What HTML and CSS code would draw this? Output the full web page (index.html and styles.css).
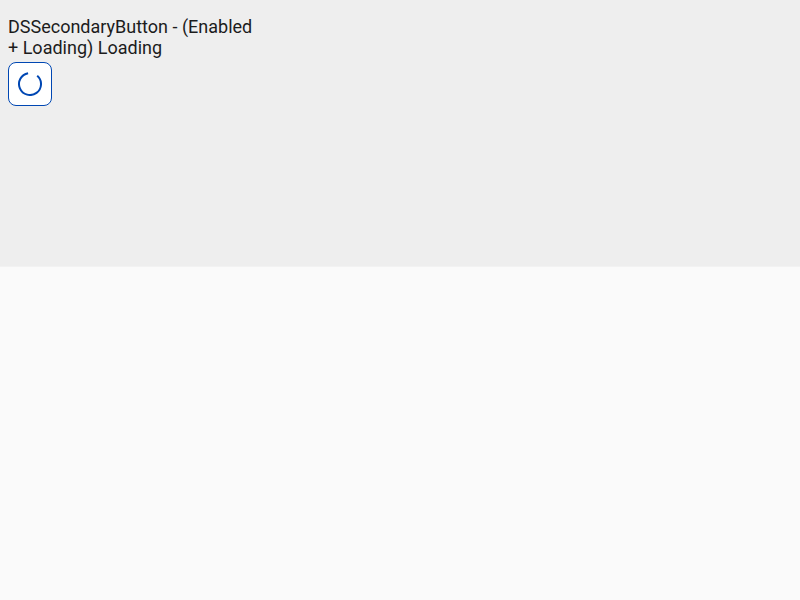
FILE: index.html
```html
<!DOCTYPE html>
<html lang="en">
<head>
<meta charset="utf-8">
<title>DSSecondaryButton</title>
<link rel="stylesheet" href="styles.css">
</head>
<body>
<main class="stage">
<h1 class="title">DSSecondaryButton - (Enabled<br>+ Loading) Loading</h1>
<button class="button" aria-label="Loading">
<svg class="spinner" viewBox="0 0 24 24"><path d="M19.2 3.65A11 11 0 1 1 10.1 1.16"/></svg>
</button>
</main>
</body>
</html>
```

FILE: styles.css
```css
body {
  margin: 0;
  background: #fafafa;
  font-family: Roboto, sans-serif;
}

.stage {
  box-sizing: border-box;
  height: 267px;
  padding: 16px 8px 0;
  border-bottom: 1px solid #f2f2f2;
  background: #eeeeee;
}

.title {
  margin: 0 0 4px;
  color: #1c1c1c;
  font-size: 18px;
  font-weight: 400;
  line-height: 21px;
}

.button {
  display: flex;
  align-items: center;
  justify-content: center;
  box-sizing: border-box;
  width: 44px;
  height: 44px;
  padding: 0;
  border: 1px solid #0047b3;
  border-radius: 8px;
  background: #fff;
}

.spinner {
  width: 24px;
  height: 24px;
  fill: none;
  stroke: #0047b3;
  stroke-width: 2;
}
```
